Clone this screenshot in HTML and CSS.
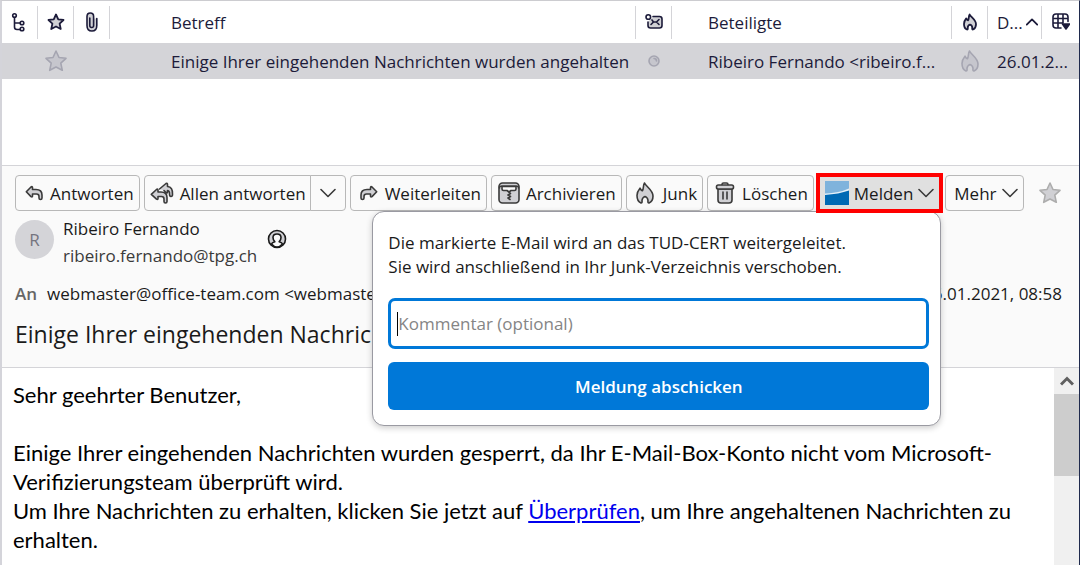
FILE: index.html
```html
<!DOCTYPE html>
<html lang="de">
<head>
    <meta charset="UTF-8">
    <meta name="viewport" content="width=device-width, initial-scale=1.0">
    <title>Posteingang</title>
    <link rel="stylesheet" href="styles.css">
</head>
<body>
    <svg class="sprite" aria-hidden="true">
        <symbol id="star" viewBox="0 0 24 24">
            <path d="M12 2l3 6.500 7 .8-5.200 4.800 1.500 7.200L12 18l-6.300 3.300 1.500-7.200L2 9.300l7-.8z"/>
        </symbol>
        <symbol id="flame" viewBox="0 0 24 24">
            <path d="M8 22C5.500 21 4 18 4 14.500 4 11.500 5.500 9 7 7.200c.6 1.300 1.300 2.400 2.400 2.600C10.800 8.600 9.800 4.500 11.500 2 13 5.500 20 9 20 15c0 3.500-1.500 6-4 7-1 0-1.200-.7-1-2.500 0-2-2-3.700-3-4-1 .3-3 2-3 4 .2 1.800 0 2.500-1 2.500z"/>
        </symbol>
        <symbol id="reply" viewBox="0 0 18 16">
            <path d="M1.300 6.800L6 2q1.500-1 1.500.8V4.500H11q6 0 6 5.500v3q0 1.500-1.500 1.500T14 13v-1.500Q14 9 11.500 9h-4v1.800q0 1.800-1.500.8z"/>
        </symbol>
        <symbol id="chevron" viewBox="0 0 16 16">
            <path d="M1 4.500l7 7 7-7"/>
        </symbol>
    </svg>

    <div class="window">
        <section class="message-list">
            <table>
                <colgroup>
                    <col class="col-icon"><col class="col-icon"><col class="col-icon">
                    <col>
                    <col class="col-icon">
                    <col class="col-people">
                    <col class="col-icon">
                    <col class="col-date">
                    <col class="col-picker">
                </colgroup>
                <thead>
                    <tr>
                        <th aria-label="Thema">
                            <svg class="icon icon-20" viewBox="0 0 20 20"><circle cx="4.500" cy="3.500" r="1.800"/><path d="M4.500 5.500V15q0 2.500 2.500 2.500h3M4.500 11h5.500"/><circle cx="12" cy="11" r="1.800"/><circle cx="12" cy="17" r="1.800"/></svg>
                        </th>
                        <th aria-label="Markiert"><svg class="icon icon-18 icon-filled icon-bold"><use href="#star"/></svg></th>
                        <th aria-label="Anhang">
                            <svg class="icon icon-20" viewBox="0 0 20 20"><path class="fill" d="M7.800 6v7.500q0 2 1.900 2t1.900-2V4.500Q11.600 1 8.300 1T5 4.500v9Q5 19 9.900 19t4.900-5.500V6.500"/></svg>
                        </th>
                        <th class="text-cell">Betreff</th>
                        <th aria-label="Gelesen">
                            <svg class="icon icon-18" viewBox="0 0 18 18"><path class="fill" d="M8 3.500h6.500q2.500 0 2.500 2.500v6.500q0 2.500-2.500 2.500h-9Q3 15 3 12.500V9"/><circle cx="3.300" cy="4" r="2.300"/><path d="M6 11.500l2.500-2.500h3l2.500 2.500M7 7l1.500 2h3L14 6.500"/></svg>
                        </th>
                        <th class="text-cell">Beteiligte</th>
                        <th aria-label="Junk"><svg class="icon icon-18 icon-filled icon-bold"><use href="#flame"/></svg></th>
                        <th class="date-cell"><span class="date-head">D...<svg class="icon icon-12 icon-bold flip"><use href="#chevron"/></svg></span></th>
                        <th>
                            <button class="picker" aria-label="Spalten auswählen">
                                <svg class="icon icon-18" viewBox="0 0 18 18"><path d="M9 15H4q-3 0-3-3V4q0-3 3-3h9q3 0 3 3v4.500M1 5.500h15M1 10h9M6 1v14M11 1v9"/><path class="solid" d="M10.500 11h7L14 16z"/></svg>
                            </button>
                        </th>
                    </tr>
                </thead>
                <tbody>
                    <tr>
                        <td></td>
                        <td><svg class="icon icon-24 muted icon-filled"><use href="#star"/></svg></td>
                        <td></td>
                        <td class="text-cell">Einige Ihrer eingehenden Nachrichten wurden angehalten</td>
                        <td><svg class="icon icon-12 muted" viewBox="0 0 12 12"><circle class="fill" cx="6" cy="6" r="5"/><path d="M6 3.500q2.500 0 2.500 2.500"/></svg></td>
                        <td class="text-cell">Ribeiro Fernando &lt;ribeiro.f...</td>
                        <td><svg class="icon icon-24 muted icon-filled"><use href="#flame"/></svg></td>
                        <td class="date-cell" colspan="2">26.01.2...</td>
                    </tr>
                </tbody>
            </table>
        </section>

        <header class="message-header">
            <div class="toolbar">
                <button class="btn"><svg class="icon icon-18 icon-filled"><use href="#reply"/></svg>Antworten</button>
                <div class="btn-split">
                    <button class="btn">
                        <svg class="icon icon-24" viewBox="0 0 24 22"><path class="fill" d="M9.500 7L16 1.500q1.500-.8 1.500 1V4.500q5.500.5 5 8 0 2-1.500 2T19.500 12q.3-3-2-3.500v1.500q0 1.500-1.500.5L14 8.500"/><path class="fill" d="M1.300 12.300L6.500 7.500Q8 6.500 8 8.300V10h3q6 0 6 5.500v4q0 1.500-1.500 1.500T14 19.500V17q0-2.500-2.500-2.500H8v1.800q0 1.800-1.500.8z"/></svg>Allen antworten
                    </button>
                    <button class="btn btn-arrow" aria-label="Weitere Antwortoptionen"><svg class="icon icon-16"><use href="#chevron"/></svg></button>
                </div>
                <button class="btn"><svg class="icon icon-18 icon-filled mirror"><use href="#reply"/></svg>Weiterleiten</button>
                <button class="btn btn-large-icon">
                    <svg class="icon icon-22" viewBox="0 0 22 22"><rect class="fill" x="1" y="1" width="20" height="20" rx="3.500"/><path class="paper" d="M1.500 6q0-2 2.500-2h14q2.500 0 2.500 2M4 4.500h14V7q0 1.500-1.500 1.500H13L11 10 9 8.500H5.500Q4 8.500 4 7z"/><path d="M11 10l1.500 1.500-2.500 1.500 2.500 1.500-2.500 1.500 2 1.500"/></svg>Archivieren
                </button>
                <button class="btn btn-large-icon"><svg class="icon icon-24 icon-filled"><use href="#flame"/></svg>Junk</button>
                <button class="btn btn-large-icon">
                    <svg class="icon icon-22" viewBox="0 0 22 22"><path class="fill" d="M4 7v11q0 3 3 3h8q3 0 3-3V7z"/><rect class="fill" x="2.500" y="3" width="17" height="4" rx="1.800"/><path d="M8 2.500Q8 1 9.500 1h3Q14 1 14 2.500M9 10v7M13 10v7"/></svg>Löschen
                </button>
                <div class="report">
                    <button class="btn btn-report" aria-expanded="true" aria-controls="report-popup">
                        <svg class="logo" viewBox="0 0 24 24"><rect width="24" height="24" fill="#0069b4"/><path d="M0 0h24v8.500Q14 12.500 0 13z" fill="#7fb3dc"/><path d="M0 12.500Q14 12 24 7.500v2Q14 13 0 14z" fill="#e4f0f9"/></svg>Melden<svg class="icon icon-16"><use href="#chevron"/></svg>
                    </button>
                    <form class="report-popup" id="report-popup">
                        <p>Die markierte E-Mail wird an das TUD-CERT weitergeleitet.<br>Sie wird anschließend in Ihr Junk-Verzeichnis verschoben.</p>
                        <div class="comment">
                            <span class="caret"></span>
                            <input type="text" placeholder="Kommentar (optional)" aria-label="Kommentar">
                        </div>
                        <button type="button" class="submit">Meldung abschicken</button>
                    </form>
                </div>
                <button class="btn btn-more">Mehr<svg class="icon icon-16"><use href="#chevron"/></svg></button>
                <button class="btn-star" aria-label="Nachricht markieren"><svg class="icon icon-24 icon-filled"><use href="#star"/></svg></button>
            </div>

            <div class="sender">
                <div class="avatar">R</div>
                <div class="sender-text">
                    <div class="sender-name">Ribeiro Fernando</div>
                    <div class="sender-mail">ribeiro.fernando@tpg.ch</div>
                </div>
                <svg class="icon icon-20 contact" viewBox="0 0 20 20"><circle class="fill" cx="10" cy="10" r="8.500"/><path class="paper" d="M4.500 15q.5-1.500 3.300-2.300Q6 11 6 8.500 6 5 10 5t4 3.500q0 2.500-1.800 4.200 2.800.8 3.300 2.300Q13 18 10 18t-5.500-3z"/></svg>
            </div>

            <div class="recipients">
                <span class="label">An</span>
                <span class="address">webmaster@office-team.com &lt;webmaster@office-team.com&gt;</span>
                <span class="date">26.01.2021, 08:58</span>
            </div>
            <h1>Einige Ihrer eingehenden Nachrichten wurden angehalten</h1>
        </header>

        <main class="message-body">
            <div class="message-text">
                <p>Sehr geehrter Benutzer,</p>
                <p>Einige Ihrer eingehenden Nachrichten wurden gesperrt, da Ihr E-Mail-Box-Konto nicht vom Microsoft-<br>Verifizierungsteam überprüft wird.<br>Um Ihre Nachrichten zu erhalten, klicken Sie jetzt auf <a href="#">Überprüfen</a>, um Ihre angehaltenen Nachrichten zu<br>erhalten.</p>
            </div>
            <div class="scrollbar">
                <button class="scroll-up" aria-label="Nach oben"><svg viewBox="0 0 14 10"><path d="M1 8.500l6-6 6 6"/></svg></button>
                <div class="scroll-thumb"></div>
            </div>
        </main>
    </div>
</body>
</html>
```
FILE: styles.css
```css
* {
    box-sizing: border-box;
}
body {
    margin: 0;
    font-family: 'Open Sans', 'Noto Sans', sans-serif;
    font-size: 17px;
    color: #1a1a1a;
    background: #fff;
}
button,
input {
    font: inherit;
    color: inherit;
}
.sprite {
    position: absolute;
    width: 0;
    height: 0;
}
.window {
    display: flex;
    flex-direction: column;
    height: 100vh;
    overflow: hidden;
    border-top: 1px solid #ccccd0;
    border-left: 2px solid #d4d4da;
    border-right: 1px solid #1f2a4d;
}

/* icons */
.icon {
    flex: none;
    fill: none;
    stroke: currentColor;
    stroke-width: 1.6;
    stroke-linecap: round;
    stroke-linejoin: round;
}
.icon-12 { width: 12px; height: 12px; }
.icon-16 { width: 16px; height: 16px; }
.icon-18 { width: 18px; height: 18px; }
.icon-20 { width: 20px; height: 20px; }
.icon-22 { width: 22px; height: 22px; }
.icon-24 { width: 24px; height: 24px; }
.icon-bold {
    stroke-width: 2.4;
}
.icon-filled,
.icon .fill {
    fill: #d0d0d4;
}
.icon .paper {
    fill: #fafafa;
}
.icon .solid {
    fill: currentColor;
}
.muted {
    color: #a5a5b1;
}
.muted.icon-filled,
.muted .fill {
    fill: #c6c6cd;
}
.flip {
    transform: rotate(180deg);
}
.mirror {
    transform: scaleX(-1);
}

/* message list */
.message-list {
    flex: none;
    min-height: 164px;
}
table {
    width: 100%;
    table-layout: fixed;
    border-collapse: collapse;
    color: #1c1b3a;
}
.col-icon { width: 36px; }
.col-people { width: 280px; }
.col-date { width: 54px; }
.col-picker { width: 37px; }
th {
    height: 42px;
    padding: 0;
    font-weight: normal;
    background: linear-gradient(#d4d4d8, #d4d4d8) right center / 1px 33px no-repeat;
}
th:last-child {
    background: none;
}
td {
    height: 36px;
    padding: 0;
    text-align: center;
    background: #d4d4d8;
}
th svg,
td svg {
    display: block;
    margin: auto;
}
.text-cell {
    padding-left: 36px;
    text-align: left;
    white-space: nowrap;
}
.text-cell:nth-child(4) {
    padding-left: 61px;
}
.date-cell {
    padding-left: 9px;
    text-align: left;
    white-space: nowrap;
}
.date-head {
    display: flex;
    align-items: center;
}
.picker {
    display: block;
    width: 100%;
    padding: 0;
    border: none;
    background: none;
}

/* message header */
.message-header {
    flex: none;
    padding: 9px 17px 17px 13px;
    border-top: 1px solid #d4d4d8;
    border-bottom: 1px solid #d4d4d8;
    background: #fafafa;
}
.toolbar {
    display: flex;
    gap: 4px;
    height: 36px;
}
.btn {
    display: flex;
    align-items: center;
    justify-content: center;
    gap: 7px;
    height: 36px;
    padding: 0 5px 0 9px;
    border: 1px solid #b8b8b8;
    border-radius: 4px;
    background: #fafafa;
    white-space: nowrap;
}
.toolbar .icon {
    color: #3a3a3a;
}
.btn-large-icon {
    gap: 6px;
    padding: 0 5px 0 6px;
}
.btn-split {
    display: flex;
}
.btn-split .btn {
    gap: 6px;
    padding: 0 4px 0 5px;
    border-radius: 4px 0 0 4px;
}
.btn-split .btn-arrow {
    width: 36px;
    margin-left: -1px;
    border-radius: 0 4px 4px 0;
}
.report {
    position: relative;
    margin: -2px -2px 0;
}
.btn-report {
    position: relative;
    z-index: 2;
    height: 40px;
    gap: 5px;
    padding: 0 5px;
    border: 4px solid #f00;
    border-radius: 0;
    background: #e0e0e0;
}
.logo {
    width: 24px;
    height: 24px;
}
.btn-more {
    gap: 5px;
    padding: 0 5px 0 8px;
}
.toolbar .btn-star {
    margin-left: auto;
    padding: 0;
    border: none;
    background: none;
}
.toolbar .btn-star .icon {
    display: block;
    color: #adadad;
}

/* report popup */
.report-popup {
    position: absolute;
    z-index: 1;
    top: 38px;
    right: 2px;
    width: 569px;
    padding: 19px 11px 15px 15px;
    border: 1px solid #9a9aa2;
    border-radius: 12px;
    background: #fff;
    box-shadow: 0 2px 6px rgba(0, 0, 0, 0.2);
}
.report-popup p {
    margin: 0 0 19px;
    line-height: 24px;
    white-space: nowrap;
}
.comment {
    display: flex;
    align-items: center;
    height: 51px;
    margin-bottom: 13px;
    padding-left: 6px;
    border: 3px solid #0078d8;
    border-radius: 7px;
}
.caret {
    width: 1px;
    height: 24px;
    background: #000;
}
.comment input {
    flex: 1;
    padding: 0;
    border: none;
    outline: none;
    background: none;
}
.comment input::placeholder {
    color: #858585;
    opacity: 1;
}
.submit {
    display: block;
    width: 100%;
    height: 48px;
    border: none;
    border-radius: 6px;
    background: #0078d8;
    color: #fff;
    font-weight: 600;
}

.sender {
    display: flex;
    align-items: center;
    margin-top: 4px;
}
.avatar,
.contact {
    margin-bottom: 6px;
}
.avatar {
    display: flex;
    align-items: center;
    justify-content: center;
    width: 39px;
    height: 39px;
    margin-right: 9px;
    border-radius: 50%;
    background: #d4d4d8;
    color: #75757f;
}
.sender-text {
    line-height: 27px;
}
.sender-mail {
    color: #3a3a3a;
}
.contact {
    margin-left: 10px;
}
.recipients {
    display: flex;
    gap: 10px;
    margin-top: 12px;
    line-height: 26px;
}
.label {
    font-weight: 600;
    color: #666;
}
.date {
    margin-left: auto;
}
h1 {
    margin: 11px 0 0;
    font-size: 23px;
    font-weight: normal;
    line-height: 32px;
    white-space: nowrap;
}

/* message body */
.message-body {
    display: flex;
    flex: 1;
    min-height: 0;
}
.message-text {
    flex: 1;
    padding: 12px 0 0 11px;
    overflow: hidden;
    font-family: Lato, Carlito, sans-serif;
    font-size: 22px;
    line-height: 29px;
    color: #000;
    white-space: nowrap;
}
.message-text p {
    margin: 0 0 29px;
}
.message-text a {
    color: #00e;
}
.scrollbar {
    flex: none;
    width: 25px;
    background: #f0f0f0;
}
.scroll-up {
    display: block;
    width: 100%;
    height: 26px;
    padding: 0;
    border: none;
    background: none;
}
.scroll-up svg {
    display: block;
    width: 14px;
    height: 10px;
    margin: auto;
    fill: none;
    stroke: #606060;
    stroke-width: 3;
}
.scroll-thumb {
    height: 82px;
    background: #cdcdcd;
}
```
